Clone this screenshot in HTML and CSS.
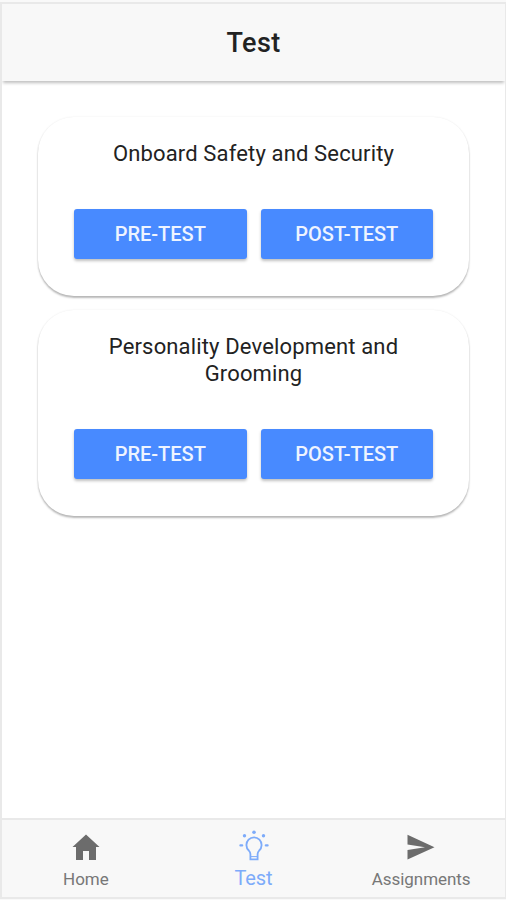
FILE: index.html
```html
<!DOCTYPE html>
<html lang="en">
<head>
<meta charset="utf-8">
<title>Test</title>
<link rel="stylesheet" href="styles.css">
</head>
<body>
<div class="app">
  <header class="header"><h1>Test</h1></header>
  <main class="content">
    <section class="card">
      <h2>Onboard Safety and Security</h2>
      <div class="actions">
        <button type="button">PRE-TEST</button>
        <button type="button">POST-TEST</button>
      </div>
    </section>
    <section class="card">
      <h2>Personality Development and Grooming</h2>
      <div class="actions">
        <button type="button">PRE-TEST</button>
        <button type="button">POST-TEST</button>
      </div>
    </section>
  </main>
  <nav class="tabs">
    <a class="tab">
      <svg class="icon" viewBox="0 0 32 32"><path fill="currentColor" d="M16 3.500 29.500 16H26v13h-7v-9h-6v9H6V16H2.500z"/></svg>
      <span>Home</span>
    </a>
    <a class="tab active">
      <svg class="icon" viewBox="0 0 32 32"><g fill="none" stroke="currentColor" stroke-width="1.800"><path d="M12.400 28.300v-5.200c0-1.400-.6-2.500-1.600-3.600a7.600 7.600 0 1 1 10.400 0c-1 1.100-1.600 2.200-1.600 3.600v5.200z"/><path d="M12.400 25.600h7.200" stroke-width="1"/></g><g fill="currentColor"><circle cx="16" cy="1.200" r="1.800"/><circle cx="6.500" cy="4.700" r="1.700"/><circle cx="25.500" cy="4.700" r="1.700"/><rect x="1.300" y="13.300" width="4" height="2.200" rx="1.100"/><rect x="26.700" y="13.300" width="4" height="2.200" rx="1.100"/></g></svg>
      <span>Test</span>
    </a>
    <a class="tab">
      <svg class="icon" viewBox="0 0 32 32"><path fill="currentColor" d="M2.500 3.800 29.500 16.200 2.500 28.600V19L20 16.200 2.500 13.400z"/></svg>
      <span>Assignments</span>
    </a>
  </nav>
</div>
</body>
</html>
```
FILE: styles.css
```css
* { box-sizing: border-box; }
html, body { height: 100%; }
body {
  margin: 0;
  padding: 2px 0 1px;
  background: #f9f9f9;
  font-family: Roboto, "Liberation Sans", sans-serif;
}
.app {
  display: flex;
  flex-direction: column;
  height: 897px;
  border: 2px solid #e9e9e9;
  border-right-width: 1px;
  background: #fff;
}
.header {
  flex: none;
  display: flex;
  align-items: center;
  justify-content: center;
  height: 77px;
  background: #f8f8f8;
  box-shadow: 0 3px 3px -1px rgba(0, 0, 0, .25);
  clip-path: inset(0 0 -8px 0);
}
h1 {
  margin: 0;
  font-size: 27px;
  line-height: 32px;
  font-weight: 500;
  letter-spacing: .4px;
  color: #222;
}
.content {
  flex: 1;
  display: flex;
  flex-direction: column;
  gap: 14px;
  padding: 36px 36px 0;
}
.card {
  padding: 23px 36px 37px;
  border-radius: 36px;
  background: #fff;
  box-shadow: 0 2px 2px rgba(0, 0, 0, .27), 0 0 2px rgba(0, 0, 0, .08);
}
h2 {
  margin: 0 0 42px;
  font-size: 22px;
  line-height: 27px;
  font-weight: 400;
  letter-spacing: .15px;
  text-align: center;
  color: #222;
}
.actions { display: flex; gap: 14px; }
button {
  flex: 1;
  height: 50px;
  padding: 0;
  border: 0;
  border-radius: 3px;
  background: #488aff;
  color: #eef4ff;
  font: 500 20px/50px Roboto, sans-serif;
  box-shadow: 0 2px 3px rgba(0, 0, 0, .25);
}
.tabs {
  flex: none;
  display: flex;
  height: 79px;
  border-top: 2px solid #e9e9e9;
  background: #f8f8f8;
}
.tab {
  flex: 1;
  display: flex;
  flex-direction: column;
  align-items: center;
  padding-top: 11px;
  color: #777;
  font-size: 17px;
  line-height: 22px;
  letter-spacing: -.05px;
}
.icon { width: 32px; height: 32px; margin-bottom: 5px; overflow: visible; color: #6c6c6c; }
.active { color: #7dabfa; font-size: 20px; }
.active .icon { margin-bottom: 4px; color: #7dabfa; }
```
